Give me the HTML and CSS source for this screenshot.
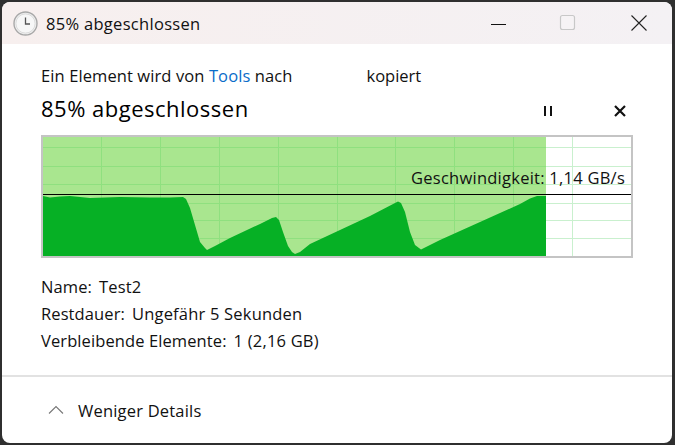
FILE: index.html
```html
<!DOCTYPE html>
<html lang="de">
<head>
<meta charset="utf-8">
<title>85% abgeschlossen</title>
<link rel="stylesheet" href="styles.css">
</head>
<body>
<div class="window">
  <header class="titlebar">
    <svg class="clock" width="25" height="25" viewBox="0 0 25 25">
      <circle cx="12.5" cy="12.5" r="11.5" fill="#efefef" stroke="#a8a8a8" stroke-width="1.4"/>
      <circle cx="12.5" cy="12.5" r="9.6" fill="#f7f7f7" stroke="#dcdcdc"/>
      <path d="M12.5 6.5V13H17" fill="none" stroke="#555" stroke-width="1.3"/>
    </svg>
    <span class="title">85% abgeschlossen</span>
    <div class="controls">
      <svg class="ctl" width="46" height="42" viewBox="0 0 46 42"><path d="M15 22.500H30" stroke="#111" stroke-width="1"/></svg>
      <svg class="ctl" width="46" height="42" viewBox="0 0 46 42"><rect x="14.500" y="13.500" width="14" height="14" rx="2" fill="#f6f3f5" stroke="#c8c8c8" stroke-width="1.2"/></svg>
      <svg class="ctl" width="46" height="42" viewBox="0 0 46 42"><path d="M15.500 13.500L30.500 28.500M30.500 13.500L15.500 28.500" stroke="#222" stroke-width="1.1" fill="none"/></svg>
    </div>
  </header>
  <main class="content">
    <p class="copyline"><span>Ein Element wird von <span class="link">Tools</span> nach</span><span class="dest">kopiert</span></p>
    <div class="headrow">
      <h1 class="heading">85% abgeschlossen</h1>
      <div class="actions">
        <svg width="12" height="12" viewBox="0 0 12 12"><path d="M3 1V11M9 1V11" stroke="#111" stroke-width="2"/></svg>
        <svg width="14" height="14" viewBox="0 0 14 14"><path d="M2 2L12 12M12 2L2 12" stroke="#111" stroke-width="2.200"/></svg>
      </div>
    </div>
    <div class="chart">
      <svg class="graph" width="588" height="119" viewBox="43 137 588 119">
        <rect x="43" y="137" width="588" height="119" fill="#fff"/>
        <g stroke="#c9f0ce" stroke-width="1">
          <path d="M43 147.500H631M43 166.500H631M43 184.500H631M43 203.500H631M43 220.500H631M43 238.500H631"/>
          <path d="M572.500 137V256"/>
        </g>
        <rect x="43" y="137" width="503" height="119" fill="#a9e68f"/>
        <g stroke="#8fe07f" stroke-width="1">
          <path d="M43 147.500H546M43 166.500H546M43 184.500H546M43 203.500H546M43 220.500H546M43 238.500H546"/>
          <path d="M101.500 137V256M160.500 137V256M219.500 137V256M278.500 137V256M337.500 137V256M395.500 137V256M454.500 137V256M513.500 137V256"/>
        </g>
        <polygon fill="#06b025" points="43,196 50,197.500 60,196.500 70,196 90,198 120,197 150,197.500 170,197.500 183,197 186,199 190,208 195,225 200,242 205,248 207,250 215,246 230,238 260,224 272,218 276,217 279,220 283,232 288,246 292,252 295,254 300,252 310,244 340,230 370,216 395,203 398,201.500 401,203 405,212 410,232 415,245 421,249.500 440,240 480,222 520,204 530,198.500 537,196 546,196 546,256 43,256"/>
        <rect x="43" y="194" width="588" height="1" fill="#000"/>
      </svg>
      <span class="speed">Geschwindigkeit: 1,14 GB/s</span>
    </div>
    <dl class="details">
      <div class="row"><dt>Name:</dt><dd>Test2</dd></div>
      <div class="row"><dt>Restdauer:</dt><dd>Ungefähr 5 Sekunden</dd></div>
      <div class="row"><dt>Verbleibende Elemente:</dt><dd>1 (2,16 GB)</dd></div>
    </dl>
  </main>
  <footer class="footer">
    <svg width="16" height="10" viewBox="0 0 16 10"><path d="M1 8.500L8 1.500L15 8.500" fill="none" stroke="#777" stroke-width="1.100"/></svg>
    <span class="less">Weniger Details</span>
  </footer>
</div>
</body>
</html>
```

FILE: styles.css
```css
* { box-sizing: border-box; }
html, body { margin: 0; height: 100%; }
body {
  background: #2f2f2f;
  padding: 2px 3px 2px 2px;
  overflow: hidden;
  font-family: "Open Sans", "Noto Sans", sans-serif;
  font-size: 16.5px;
  color: #111;
}
.window {
  height: 441px;
  background: #fff;
  border-radius: 8px;
  overflow: hidden;
  display: flex;
  flex-direction: column;
}
.titlebar {
  height: 42px;
  flex: none;
  display: flex;
  align-items: center;
  padding-left: 11px;
  background: linear-gradient(90deg, #f7efee, #f4f1f4);
}
.clock { flex: none; }
.title { margin-left: 8px; letter-spacing: .3px; }
.controls { margin-left: auto; display: flex; padding-right: 10px; }
.ctl { display: block; margin-left: 24px; }
.content { flex: none; height: 331px; padding: 0 39px; }
.copyline { margin: 0; padding-top: 22px; height: 50px; display: flex; line-height: 20px; letter-spacing: .1px; }
.link { color: #0a6cc9; }
.dest { margin-left: 74px; letter-spacing: 0; }
.headrow { display: flex; align-items: center; justify-content: space-between; height: 31px; }
.heading { margin: 0 0 4px; font-size: 22px; font-weight: 400; line-height: 28px; letter-spacing: .5px; color: #000; }
.actions { display: flex; align-items: center; gap: 59px; padding-right: 6px; margin: 2px 0 0; }
.actions svg { display: block; }
.chart {
  position: relative;
  width: 592px;
  height: 123px;
  margin-top: 10px;
  border: 2px solid #c4c4c4;
}
.graph { display: block; }
.speed { position: absolute; right: 6px; top: 30px; line-height: 22px; white-space: nowrap; letter-spacing: .25px; }
.details { margin: 15px 0 0; }
.row { display: flex; gap: 7px; height: 27px; line-height: 27px; }
dt, dd { margin: 0; }
dt { letter-spacing: .1px; }
dd { letter-spacing: .2px; }
.footer {
  flex: 1;
  border-top: 2px solid #e2e2e2;
  display: flex;
  align-items: center;
  gap: 14px;
  padding-left: 46px;
}
.less { letter-spacing: .2px; }
```
